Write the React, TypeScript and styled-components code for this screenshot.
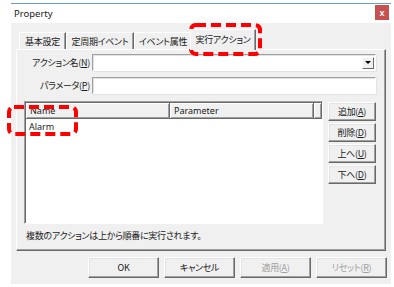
import React from "react";
import styled, { createGlobalStyle } from "styled-components";

const GlobalStyle = createGlobalStyle`
  html, body {
    margin: 0;
    padding: 0;
    background: #ffffff;
  }
  body {
    font-family: "Noto Sans CJK JP", "Noto Sans", sans-serif;
    font-size: 9px;
    letter-spacing: -0.3px;
    color: #1a1a1a;
    font-feature-settings: "palt";
  }
`;

const Page = styled.div`
  position: relative;
  width: 394px;
  height: 287px;
  padding: 3px 0 0 11px;
  box-sizing: border-box;
`;

const Window = styled.div`
  width: 380px;
  height: 280px;
  background: #f0f0f0;
  border-top: 1px solid #6c9bd6;
  display: flex;
  flex-direction: column;
`;

const TitleBar = styled.div`
  height: 19px;
  background: #ffffff;
  display: flex;
  align-items: center;
  justify-content: space-between;
  padding: 0 2px 0 3px;
`;

const Title = styled.span`
  font-family: "Noto Sans", sans-serif;
  font-size: 9.5px;
  letter-spacing: 0;
  line-height: 19px;
`;

const CloseButton = styled.div`
  align-self: flex-start;
  margin-top: 1px;
  width: 14px;
  height: 15px;
  background: #c75050;
  color: #ffffff;
  font-family: "Liberation Sans", sans-serif;
  font-size: 9px;
  font-weight: bold;
  letter-spacing: 0;
  display: flex;
  align-items: center;
  justify-content: center;
`;

const Body = styled.div`
  padding: 5px 5px 0 5px;
  display: flex;
  flex-direction: column;
`;

const TabStrip = styled.div`
  display: flex;
  align-items: flex-end;
  height: 21px;
  padding-left: 3px;
  position: relative;
  z-index: 1;
`;

const Tab = styled.div<{ $w: number; $active?: boolean }>`
  width: ${(p) => p.$w}px;
  height: ${(p) => (p.$active ? 21 : 17)}px;
  margin: ${(p) => (p.$active ? "0 -2px -1px -2px" : "0")};
  box-sizing: border-box;
  background: #f0f0f0;
  border-top: 1px solid #ffffff;
  border-left: 1px solid #ffffff;
  border-right: 1px solid #696969;
  box-shadow: inset -1px 0 0 #a0a0a0;
  display: flex;
  align-items: center;
  justify-content: center;
  white-space: nowrap;
  line-height: 15px;
  padding-bottom: ${(p) => (p.$active ? 2 : 0)}px;
`;

const Panel = styled.div`
  height: 202px;
  box-sizing: border-box;
  border-top: 1px solid #ffffff;
  border-left: 1px solid #ffffff;
  border-right: 1px solid #696969;
  border-bottom: 1px solid #696969;
  box-shadow: inset -1px -1px 0 #a0a0a0;
  padding: 4px 9px 0 0;
  display: flex;
  flex-direction: column;
`;

const FormGrid = styled.div`
  display: grid;
  grid-template-columns: 75px 1fr;
  grid-auto-rows: 17px;
  row-gap: 6px;
`;

const Label = styled.label`
  text-align: right;
  padding-right: 2px;
  line-height: 17px;
  white-space: nowrap;
`;

const Field = styled.div`
  background: #ffffff;
  box-sizing: border-box;
  border-top: 1px solid #a0a0a0;
  border-left: 1px solid #a0a0a0;
  border-right: 1px solid #ffffff;
  border-bottom: 1px solid #ffffff;
  box-shadow: inset 1px 1px 0 #e3e3e3, 1px 1px 0 #e3e3e3;
  display: flex;
  justify-content: flex-end;
  align-items: center;
  padding-right: 1px;
`;

const DropButton = styled.div`
  width: 12px;
  height: 12px;
  box-sizing: border-box;
  background: #f0f0f0;
  border-top: 1px solid #ffffff;
  border-left: 1px solid #ffffff;
  border-right: 1px solid #696969;
  border-bottom: 1px solid #696969;
  display: flex;
  align-items: center;
  justify-content: center;
`;

const Arrow = styled.div`
  width: 0;
  height: 0;
  border-left: 3px solid transparent;
  border-right: 3px solid transparent;
  border-top: 3px solid #000000;
`;

const ListRow = styled.div`
  display: flex;
  gap: 5px;
  margin: 7px 0 0 7px;
`;

const ListView = styled.div`
  width: 300px;
  height: 123px;
  box-sizing: border-box;
  background: #ffffff;
  border-top: 1px solid #a0a0a0;
  border-left: 1px solid #a0a0a0;
  border-right: 1px solid #ffffff;
  border-bottom: 1px solid #ffffff;
  box-shadow: inset 1px 1px 0 #696969;
  padding: 1px 0 0 1px;
`;

const Header = styled.div`
  display: flex;
  height: 16px;
`;

const HeaderCell = styled.div<{ $w: number }>`
  width: ${(p) => p.$w}px;
  flex: ${(p) => (p.$w ? "none" : "1")};
  box-sizing: border-box;
  background: #f0f0f0;
  border-right: 1px solid #696969;
  border-bottom: 1px solid #696969;
  box-shadow: inset 1px 1px 0 #ffffff, inset -1px -1px 0 #a0a0a0;
  padding-left: 4px;
  line-height: 15px;
  font-family: "Noto Sans", sans-serif;
  letter-spacing: 0;
`;

const Item = styled.div`
  font-family: "Noto Sans", sans-serif;
  letter-spacing: 0;
  padding: 1px 0 0 3px;
  line-height: 14px;
  height: 14px;
`;

const SideButtons = styled.div`
  display: flex;
  flex-direction: column;
  gap: 2px;
  margin-top: 1px;
`;

const Button = styled.div<{ $w: number; $h: number; $disabled?: boolean }>`
  width: ${(p) => p.$w}px;
  height: ${(p) => p.$h}px;
  box-sizing: border-box;
  background: #f0f0f0;
  border-top: 1px solid #ffffff;
  border-left: 1px solid #ffffff;
  border-right: 1px solid #696969;
  border-bottom: 1px solid #696969;
  box-shadow: inset -1px -1px 0 #a0a0a0, inset 1px 1px 0 #e3e3e3;
  color: ${(p) => (p.$disabled ? "#a0a0a0" : "#1a1a1a")};
  display: flex;
  align-items: center;
  justify-content: center;
  white-space: nowrap;
  line-height: 14px;
`;

const Note = styled.div`
  margin: 5px 0 0 9px;
  line-height: 14px;
`;

const Footer = styled.div`
  display: flex;
  justify-content: flex-end;
  gap: 5px;
  padding: 6px 4px 0 0;
`;

const Annotation = styled.svg<{ $x: number; $y: number }>`
  position: absolute;
  left: ${(p) => p.$x}px;
  top: ${(p) => p.$y}px;
  overflow: visible;
`;

const Mark = ({ x, y, w, h }: { x: number; y: number; w: number; h: number }) => (
  <Annotation $x={x} $y={y} width={w} height={h}>
    <rect
      x={2}
      y={2}
      width={w - 4}
      height={h - 4}
      rx={5}
      fill="none"
      stroke="#ff0000"
      strokeWidth={4}
      strokeDasharray="10 5"
    />
  </Annotation>
);

const App = () => {
  return (
    <Page>
      <GlobalStyle />
      <Window>
        <TitleBar>
          <Title>Property</Title>
          <CloseButton>x</CloseButton>
        </TitleBar>
        <Body>
          <TabStrip>
            <Tab $w={47}>基本設定</Tab>
            <Tab $w={68}>定周期イベント</Tab>
            <Tab $w={58}>イベント属性</Tab>
            <Tab $w={66} $active>実行アクション</Tab>
          </TabStrip>
          <Panel>
            <FormGrid>
              <Label>アクション名(<u>N</u>)</Label>
              <Field>
                <DropButton>
                  <Arrow />
                </DropButton>
              </Field>
              <Label>パラメータ(<u>P</u>)</Label>
              <Field />
            </FormGrid>
            <ListRow>
              <ListView>
                <Header>
                  <HeaderCell $w={144}>Name</HeaderCell>
                  <HeaderCell $w={144}>Parameter</HeaderCell>
                  <HeaderCell $w={0} />
                </Header>
                <Item>Alarm</Item>
              </ListView>
              <SideButtons>
                <Button $w={48} $h={19}>追加(<u>A</u>)</Button>
                <Button $w={48} $h={19}>削除(<u>D</u>)</Button>
                <Button $w={48} $h={19}>上へ(<u>U</u>)</Button>
                <Button $w={48} $h={19}>下へ(<u>D</u>)</Button>
              </SideButtons>
            </ListRow>
            <Note>複数のアクションは上から順番に実行されます。</Note>
          </Panel>
        </Body>
        <Footer>
          <Button $w={71} $h={21}>OK</Button>
          <Button $w={71} $h={21}>キャンセル</Button>
          <Button $w={71} $h={21} $disabled>適用(<u>A</u>)</Button>
          <Button $w={71} $h={21} $disabled>リセット(<u>R</u>)</Button>
        </Footer>
      </Window>
      <Mark x={189} y={23} w={73} h={33} />
      <Mark x={7} y={105} w={71} h={31} />
    </Page>
  );
};

export default App;
